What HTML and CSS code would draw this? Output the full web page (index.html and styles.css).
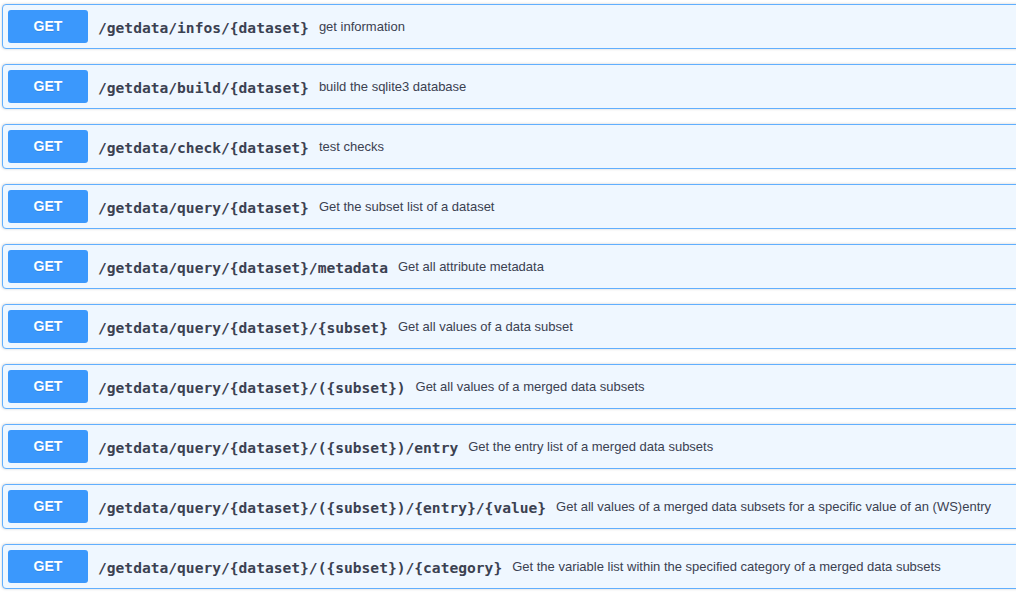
FILE: index.html
```html
<!DOCTYPE html>
<html>
<head>
<meta charset="utf-8">
<link rel="stylesheet" href="styles.css">
</head>
<body>
<div class="list">
  <div class="opblock"><span class="method">GET</span><span class="path">/getdata/infos/{dataset}</span><span class="desc">get information</span></div>
  <div class="opblock"><span class="method">GET</span><span class="path">/getdata/build/{dataset}</span><span class="desc">build the sqlite3 database</span></div>
  <div class="opblock"><span class="method">GET</span><span class="path">/getdata/check/{dataset}</span><span class="desc">test checks</span></div>
  <div class="opblock"><span class="method">GET</span><span class="path">/getdata/query/{dataset}</span><span class="desc">Get the subset list of a dataset</span></div>
  <div class="opblock"><span class="method">GET</span><span class="path">/getdata/query/{dataset}/metadata</span><span class="desc">Get all attribute metadata</span></div>
  <div class="opblock"><span class="method">GET</span><span class="path">/getdata/query/{dataset}/{subset}</span><span class="desc">Get all values of a data subset</span></div>
  <div class="opblock"><span class="method">GET</span><span class="path">/getdata/query/{dataset}/({subset})</span><span class="desc">Get all values of a merged data subsets</span></div>
  <div class="opblock"><span class="method">GET</span><span class="path">/getdata/query/{dataset}/({subset})/entry</span><span class="desc">Get the entry list of a merged data subsets</span></div>
  <div class="opblock"><span class="method">GET</span><span class="path">/getdata/query/{dataset}/({subset})/{entry}/{value}</span><span class="desc">Get all values of a merged data subsets for a specific value of an (WS)entry</span></div>
  <div class="opblock"><span class="method">GET</span><span class="path">/getdata/query/{dataset}/({subset})/{category}</span><span class="desc">Get the variable list within the specified category of a merged data subsets</span></div>
</div>
</body>
</html>
```

FILE: styles.css
```css
html, body {
  margin: 0;
  padding: 0;
  background: #ffffff;
  overflow: hidden;
}
body {
  width: 1016px;
  height: 595px;
}
.list {
  padding: 4px 0 0 2px;
  display: flex;
  flex-direction: column;
  gap: 15px;
  width: 1040px;
}
.opblock {
  display: flex;
  align-items: center;
  height: 43px;
  box-sizing: content-box;
  padding: 0 5px;
  border: 1px solid #61affe;
  border-radius: 4px;
  background: #eff7ff;
  box-shadow: 0 0 3px rgba(0, 0, 0, 0.19);
}
.method {
  flex: none;
  width: 80px;
  height: 33px;
  line-height: 32px;
  text-align: center;
  background: #3b98fc;
  color: #ffffff;
  border-radius: 3px;
  font-family: "Liberation Sans", Arial, sans-serif;
  font-weight: 700;
  font-size: 14px;
  text-shadow: 0 1px 0 rgba(0, 0, 0, 0.1);
}
.path {
  flex: none;
  padding: 0 10px;
  font-family: "DejaVu Sans Mono", monospace;
  font-weight: 700;
  font-size: 14.6px;
  color: #3b4151;
  position: relative;
  top: 1px;
}
.desc {
  font-family: "Liberation Sans", Arial, sans-serif;
  font-size: 13px;
  color: #3b4151;
  white-space: nowrap;
}
```
